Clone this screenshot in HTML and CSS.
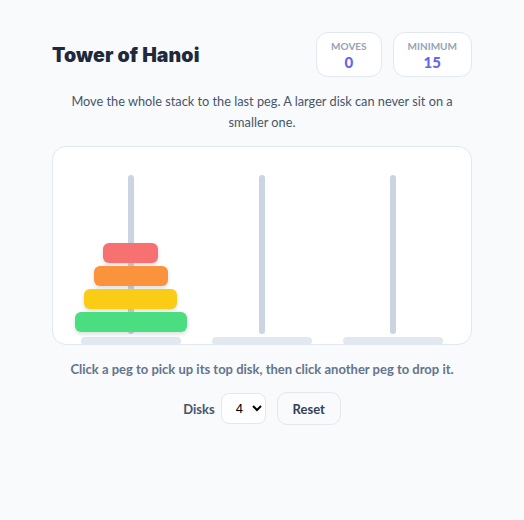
FILE: index.html
```html
<!DOCTYPE html>
<html lang="en">
<head>
<meta charset="utf-8">
<title>Tower of Hanoi</title>
<link rel="stylesheet" href="styles.css">
</head>
<body>
<main class="app">
  <header class="top">
    <h1 class="title">Tower of Hanoi</h1>
    <div class="stats">
      <div class="stat"><span class="stat-label">Moves</span><span class="stat-value">0</span></div>
      <div class="stat"><span class="stat-label">Minimum</span><span class="stat-value">15</span></div>
    </div>
  </header>
  <p class="intro">Move the whole stack to the last peg. A larger disk can never sit on a smaller one.</p>
  <section class="board">
    <div class="peg-col">
      <div class="peg"></div>
      <div class="stack">
        <div class="disk red" style="width:55px"></div>
        <div class="disk orange" style="width:74px"></div>
        <div class="disk yellow" style="width:93px"></div>
        <div class="disk green" style="width:112px"></div>
      </div>
      <div class="base"></div>
    </div>
    <div class="peg-col">
      <div class="peg"></div>
      <div class="stack"></div>
      <div class="base"></div>
    </div>
    <div class="peg-col">
      <div class="peg"></div>
      <div class="stack"></div>
      <div class="base"></div>
    </div>
  </section>
  <p class="hint">Click a peg to pick up its top disk, then click another peg to drop it.</p>
  <div class="controls">
    <label class="disks-label" for="disks">Disks</label>
    <select id="disks" class="select">
      <option>3</option>
      <option selected>4</option>
      <option>5</option>
      <option>6</option>
    </select>
    <button class="reset" type="button">Reset</button>
  </div>
</main>
</body>
</html>
```

FILE: styles.css
```css
* { box-sizing: border-box; }
html, body { margin: 0; padding: 0; }
body {
  background: #f8fafc;
  font-family: Lato, "Noto Sans", sans-serif;
  color: #1e293b;
}
.app {
  width: 420px;
  margin: 0 auto;
  padding-top: 32px;
}
.top {
  display: flex;
  align-items: center;
  justify-content: space-between;
}
.title {
  margin: 0;
  font-family: Inter, Lato, sans-serif;
  font-size: 19.5px;
  font-weight: 900;
  letter-spacing: 0.1px;
  color: #1e293b;
}
.stats {
  display: flex;
  gap: 11px;
}
.stat {
  display: flex;
  flex-direction: column;
  align-items: center;
  background: #fff;
  border: 1px solid #e2e8f0;
  border-radius: 12px;
  height: 45px;
  padding: 7px 14px 0;
}
.stat-label {
  font-size: 10px;
  font-weight: 700;
  text-transform: uppercase;
  color: #94a3b8;
  line-height: 12px;
}
.stat-value {
  font-size: 15px;
  font-weight: 900;
  color: #6366f1;
  line-height: 20px;
}
.intro {
  margin: 14px 0 0;
  text-align: center;
  font-size: 12.75px;
  line-height: 21px;
  color: #475569;
}
.board {
  margin-top: 13px;
  height: 199px;
  background: #fff;
  border: 1px solid #e2e8f0;
  border-radius: 14px;
  overflow: hidden;
  display: grid;
  grid-template-columns: repeat(3, 1fr);
  padding: 0 12px;
}
.peg-col {
  position: relative;
  display: flex;
  flex-direction: column;
  align-items: center;
  justify-content: flex-end;
}
.peg {
  position: absolute;
  top: 28px;
  bottom: 10px;
  left: 50%;
  width: 6px;
  margin-left: -3px;
  background: #cbd5e1;
  border-radius: 3px;
}
.stack {
  position: relative;
  display: flex;
  flex-direction: column;
  align-items: center;
  gap: 3px;
  margin-bottom: 5px;
}
.disk {
  height: 20px;
  border-radius: 6px;
  box-shadow: 0 2px 4px rgba(15, 23, 42, 0.15);
}
.red { background: #f87171; }
.orange { background: #fb923c; }
.yellow { background: #facc15; }
.green { background: #4ade80; }
.base {
  width: 100px;
  height: 8px;
  margin-bottom: -1px;
  background: #e2e8f0;
  border-radius: 4px;
}
.hint {
  margin: 15px 0 0;
  text-align: center;
  font-size: 13px;
  font-weight: 700;
  color: #64748b;
  line-height: 18px;
}
.controls {
  margin-top: 14px;
  display: flex;
  justify-content: center;
  align-items: center;
  gap: 6px;
}
.disks-label {
  font-size: 13px;
  font-weight: 700;
  color: #475569;
}
.select {
  width: 45px;
  height: 31px;
  border: 1px solid #e2e8f0;
  border-radius: 8px;
  background: #fff;
  font-size: 13px;
  padding: 0 4px 0 10px;
  margin-right: 5px;
}
.reset {
  width: 64px;
  height: 33px;
  border: 1px solid #e2e8f0;
  border-radius: 10px;
  background: #f8fafc;
  font-family: inherit;
  font-size: 13px;
  font-weight: 700;
  color: #334155;
}
```
